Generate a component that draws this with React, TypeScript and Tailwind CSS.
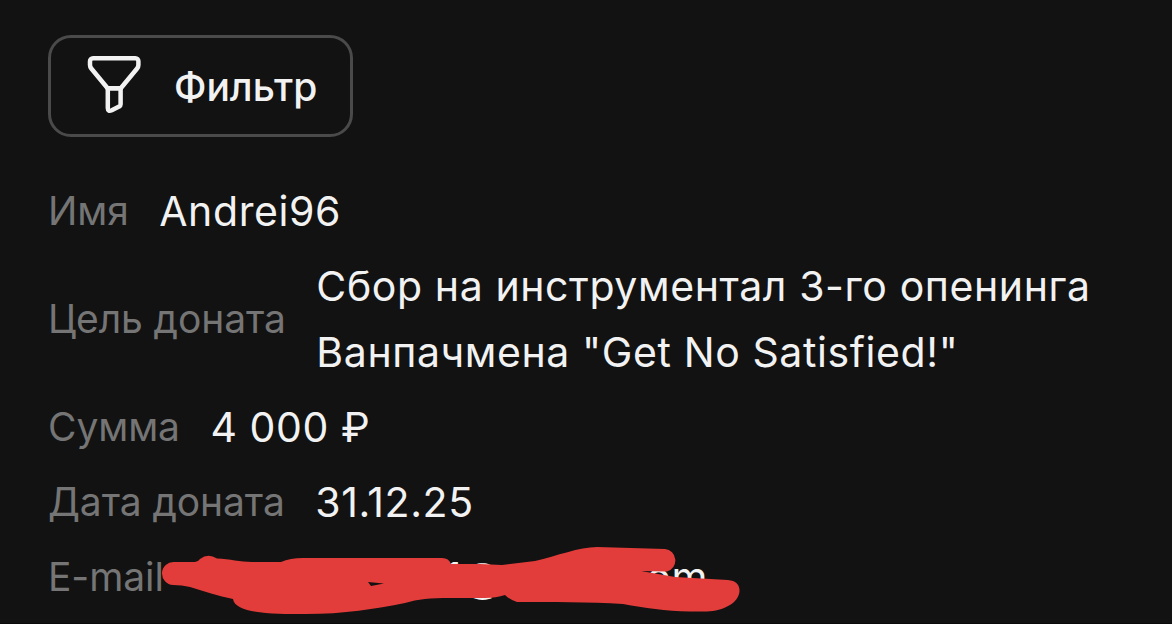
const donation = [
  { label: "Имя", value: "Andrei96" },
  {
    label: "Цель доната",
    value: 'Сбор на инструментал 3-го опенинга Ванпачмена "Get No Satisfied!"',
  },
  { label: "Сумма", value: "4 000 ₽" },
  { label: "Дата доната", value: "31.12.25" },
];

const labelClass =
  "shrink-0 text-[39px] font-normal tracking-[-0.1px] text-[#757575]";
const valueClass = "text-[41px] leading-[66px] tracking-[0.6px] text-[#f2f2f2]";

function FilterIcon() {
  return (
    <svg
      width="56"
      height="60"
      viewBox="0 0 56 60"
      fill="none"
      stroke="#f2f2f2"
      strokeWidth="4.5"
      strokeLinejoin="round"
    >
      <path d="M7 2.300h42.400a3 3 0 0 1 3 3v3.700q0 1.900-1.300 3.500L34.800 32.200H21.600L5.300 12.500q-1.300-1.600-1.300-3.500V5.300a3 3 0 0 1 3-3z" />
      <path d="M21.800 32.200h12.800v16q0 1.700-1.500 2.400l-7.300 3.700q-4 1.800-4-2.300z" />
    </svg>
  );
}

// Marker stroke that covers the address
function Scribble() {
  return (
    <svg
      className="absolute -left-12 top-0 z-10"
      width="760"
      height="80"
      viewBox="0 544 760 80"
      fill="#e23d3a"
      fillRule="evenodd"
    >
      <path d="M174 562H195Q198 562 200 559Q208 553 217 558.500C230 559 240 562 252 562H281Q290 558 303 558H442Q449 558 451 564L480 564L502 565L535 561C557 556 579 547 597 547L665 549A11.500 11.500 0 0 1 667 571.500L641 571L675 577L728 580Q739.500 581 739.500 591C739 603 723 611 707 611.500H690C665 611 645 608 623 604C590 602 550 602 517 602Q510 600 505 595Q496 598 485 598H450C430 598 418 599 405 603C375 609 345 614 305 614C275 614 235 614 233 599C218 596 204 591 190 587Q182 585 173 585A11.500 11.500 0 0 1 174 562ZM368 582L384 583.500L371 586Z" />
    </svg>
  );
}

export default function App() {
  return (
    <div className="h-[624px] w-[1172px] overflow-hidden border-b border-[#0a0a0a] bg-[#121212] px-12 pt-[35px] font-['Inter',sans-serif]">
      <button className="flex h-[102px] w-[305px] items-center rounded-[23px] border-[3px] border-[#4a4a4a] pl-[35px]">
        <FilterIcon />
        <span className="ml-8 text-[39px] font-medium leading-none text-[#f2f2f2]">
          Фильтр
        </span>
      </button>
      <div className="mt-[41px] flex flex-col gap-[9px]">
        {donation.map((row) => (
          <div key={row.label} className="flex items-center gap-[30.5px]">
            <span className={labelClass}>{row.label}</span>
            <span className={valueClass}>{row.value}</span>
          </div>
        ))}
        <div className="relative flex items-center">
          <span className={labelClass}>E-mail</span>
          <span className={`${valueClass} ml-[281px]`}>1@</span>
          <span className={`${valueClass} ml-[120px]`}>com</span>
          <Scribble />
        </div>
      </div>
    </div>
  );
}
